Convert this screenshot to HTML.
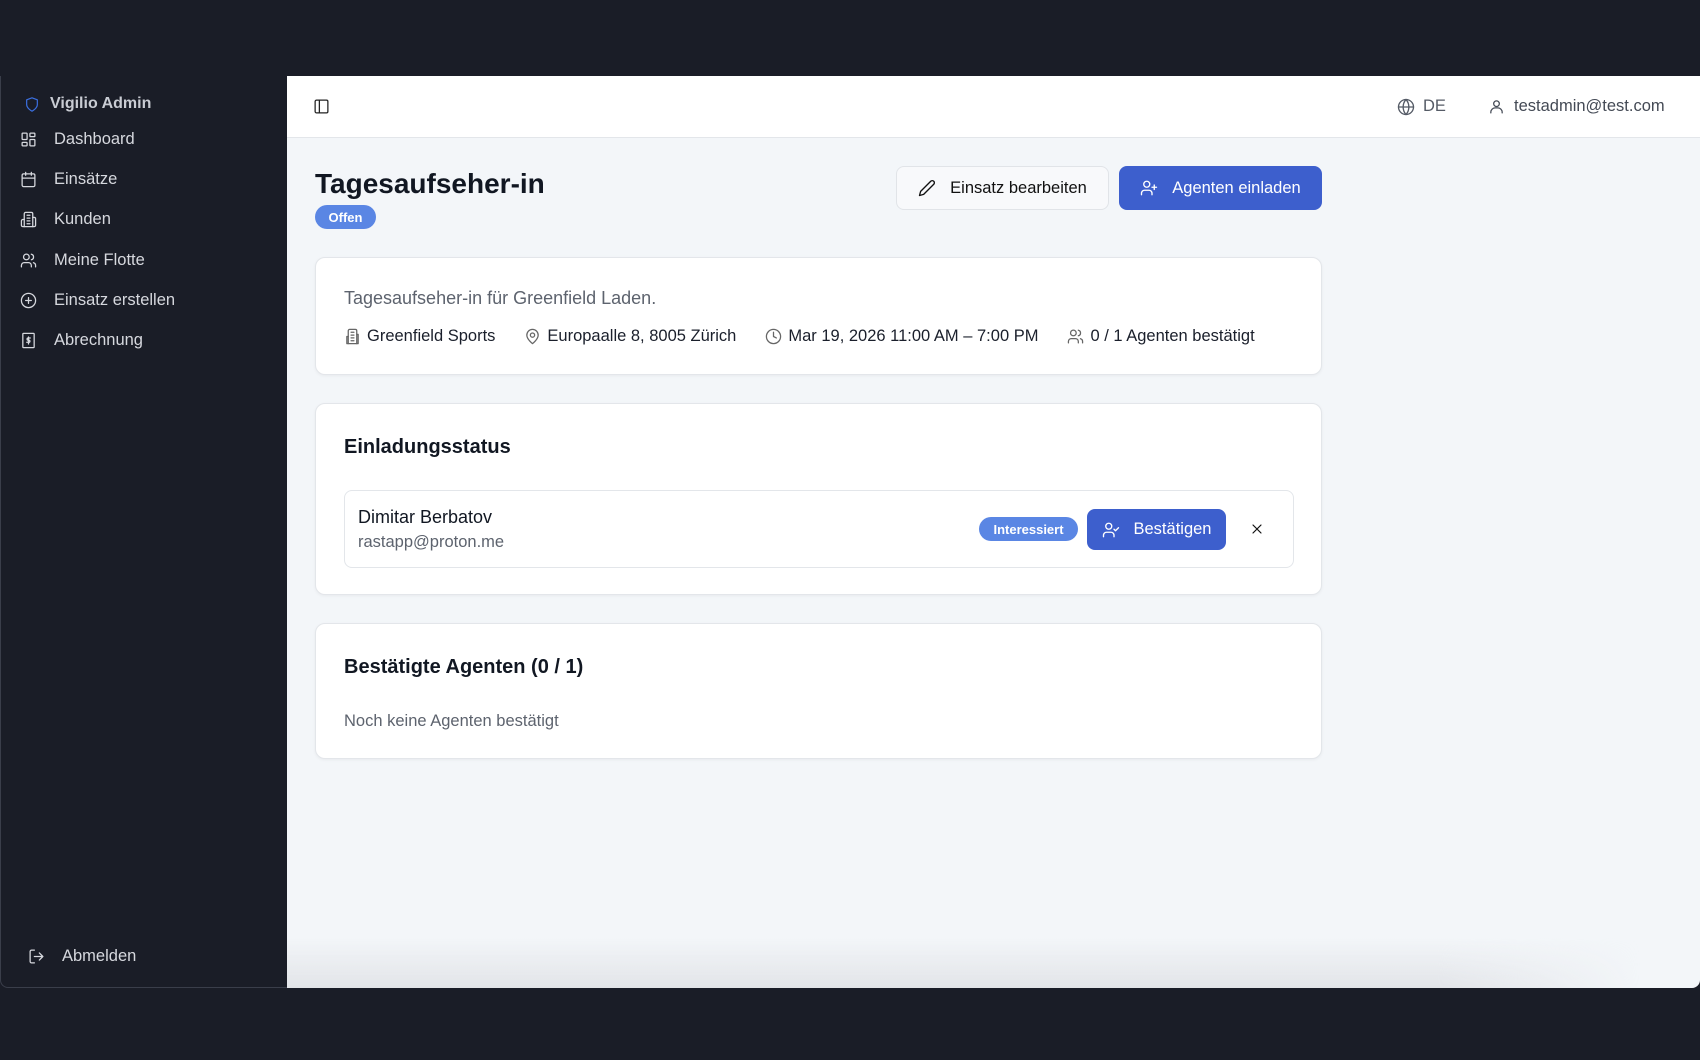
<!DOCTYPE html>
<html><head><meta charset="utf-8"><style>
*{box-sizing:border-box;margin:0;padding:0}
body{width:1700px;height:1060px;background:#1a1d27;font-family:"Liberation Sans",sans-serif;position:relative;overflow:hidden;color:#0f1420}
.side{position:absolute;left:0;top:76px;width:287px;height:912px;background:#1a1d27;border-left:1px solid #3a3e4a;border-bottom:1px solid #3a3e4a;border-radius:0 0 0 8px}
.brand{position:absolute;left:24px;top:95px;color:#c9ccd3;font-weight:bold;font-size:16px;display:flex;align-items:center;gap:10px}
.nav{position:absolute;left:20px;color:#d6d8de;font-size:16.5px;display:flex;align-items:center;gap:17px}
.nav svg{width:17px;height:17px}
.main{position:absolute;left:287px;top:76px;width:1413px;height:912px;background:#f3f6f9;border-radius:0 0 8px 0;overflow:hidden}
.hdr{height:62px;background:#fff;border-bottom:1px solid #e3e6ea;position:relative}
.shade{position:absolute;left:0;right:60px;bottom:0;height:50px;background:linear-gradient(#f3f6f900,#e2e4e8);-webkit-mask-image:linear-gradient(90deg,#000 85%,transparent);mask-image:linear-gradient(90deg,#000 85%,transparent)}
.card{position:absolute;left:28px;width:1007px;background:#fff;border:1px solid #e3e6ea;border-radius:10px;box-shadow:0 1px 3px rgba(0,0,0,.05)}
.btn{position:absolute;top:90px;height:44px;border-radius:8px;display:flex;align-items:center;justify-content:center;gap:14px;font-size:16.5px}
.meta{display:flex;align-items:center;gap:6px;font-size:16.5px;color:#1a1f2b}
svg{fill:none;stroke:currentColor;stroke-width:1.8;stroke-linecap:round;stroke-linejoin:round}
</style></head><body>
<div class="side"></div>
<div class="brand"><svg width="16" height="17" viewBox="0 0 24 24" style="stroke:#3b6fe0"><path d="M12 22s8-4 8-10V5l-8-3-8 3v7c0 6 8 10 8 10z"/></svg>Vigilio Admin</div>
<div class="nav" style="top:130px"><svg viewBox="0 0 24 24"><rect x="3" y="3" width="7" height="9" rx="1"/><rect x="14" y="3" width="7" height="5" rx="1"/><rect x="14" y="12" width="7" height="9" rx="1"/><rect x="3" y="16" width="7" height="5" rx="1"/></svg>Dashboard</div>
<div class="nav" style="top:170px"><svg viewBox="0 0 24 24"><rect x="3" y="4" width="18" height="18" rx="2"/><path d="M16 2v4M8 2v4M3 10h18"/></svg>Einsätze</div>
<div class="nav" style="top:210px"><svg viewBox="0 0 24 24"><path d="M6 22V4a2 2 0 0 1 2-2h8a2 2 0 0 1 2 2v18z"/><path d="M6 12H4a2 2 0 0 0-2 2v6a2 2 0 0 0 2 2h2M18 9h2a2 2 0 0 1 2 2v9a2 2 0 0 1-2 2h-2M10 6h4M10 10h4M10 14h4M10 18h4"/></svg>Kunden</div>
<div class="nav" style="top:251px"><svg viewBox="0 0 24 24"><path d="M16 21v-2a4 4 0 0 0-4-4H6a4 4 0 0 0-4 4v2"/><circle cx="9" cy="7" r="4"/><path d="M22 21v-2a4 4 0 0 0-3-3.9M16 3.1a4 4 0 0 1 0 7.8"/></svg>Meine Flotte</div>
<div class="nav" style="top:291px"><svg viewBox="0 0 24 24"><circle cx="12" cy="12" r="10"/><path d="M8 12h8M12 8v8"/></svg>Einsatz erstellen</div>
<div class="nav" style="top:331px"><svg viewBox="0 0 24 24"><rect x="4" y="2" width="16" height="20" rx="1"/><path d="M14.5 8.5h-3a1.5 1.5 0 0 0 0 3h1a1.5 1.5 0 0 1 0 3h-3M12 7v10"/></svg>Abrechnung</div>
<div class="nav" style="top:947px;left:28px"><svg viewBox="0 0 24 24"><path d="M9 21H5a2 2 0 0 1-2-2V5a2 2 0 0 1 2-2h4M16 17l5-5-5-5M21 12H9"/></svg>Abmelden</div>

<div class="main">
<div class="hdr">
<svg style="position:absolute;left:26px;top:22px;color:#222" width="17" height="17" viewBox="0 0 24 24"><rect x="3" y="3" width="18" height="18" rx="2"/><path d="M9 3v18"/></svg>
<div style="position:absolute;left:1110px;top:21px;display:flex;align-items:center;gap:8px;color:#555b66;font-size:16.5px"><svg width="18" height="18" viewBox="0 0 24 24"><circle cx="12" cy="12" r="10"/><path d="M2 12h20M12 2a15 15 0 0 1 0 20M12 2a15 15 0 0 0 0 20"/></svg>DE</div>
<div style="position:absolute;left:1201px;top:21px;display:flex;align-items:center;gap:9px;color:#444a55;font-size:16.5px"><svg width="17" height="17" viewBox="0 0 24 24"><circle cx="12" cy="8" r="4"/><path d="M4 21v-1a6 6 0 0 1 6-6h4a6 6 0 0 1 6 6v1"/></svg>testadmin@test.com</div>
</div>
<div style="position:absolute;left:28px;top:92px;font-size:28px;font-weight:bold;color:#111722">Tagesaufseher-in</div>
<div style="position:absolute;left:28px;top:129px;width:61px;height:24px;border-radius:12px;background:#5a86e4;color:#fff;font-size:13px;font-weight:bold;display:flex;align-items:center;justify-content:center">Offen</div>
<div class="btn" style="left:609px;width:213px;background:#f8f9fb;border:1px solid #e1e4e8;color:#111"><svg width="18" height="18" viewBox="0 0 24 24"><path d="M17 3a2.8 2.8 0 1 1 4 4L7.5 20.5 2 22l1.5-5.5z"/></svg>Einsatz bearbeiten</div>
<div class="btn" style="left:832px;width:203px;background:#3d5fcd;color:#fff"><svg width="18" height="18" viewBox="0 0 24 24"><path d="M16 21v-2a4 4 0 0 0-4-4H6a4 4 0 0 0-4 4v2"/><circle cx="9" cy="7" r="4"/><path d="M19 8v6M22 11h-6"/></svg>Agenten einladen</div>

<div class="card" style="top:181px;height:118px">
<div style="position:absolute;left:28px;top:30px;font-size:18px;color:#5d636e">Tagesaufseher-in für Greenfield Laden.</div>
<div style="position:absolute;left:28px;top:69px;display:flex;gap:29px">
<div class="meta"><svg width="17" height="17" viewBox="0 0 24 24" style="color:#666"><path d="M6 22V4a2 2 0 0 1 2-2h8a2 2 0 0 1 2 2v18z"/><path d="M6 12H4v10h2M18 9h2v13h-2M10 6h4M10 10h4M10 14h4M10 18h4"/></svg>Greenfield Sports</div>
<div class="meta"><svg width="17" height="17" viewBox="0 0 24 24" style="color:#666"><path d="M20 10c0 6-8 12-8 12s-8-6-8-12a8 8 0 0 1 16 0z"/><circle cx="12" cy="10" r="3"/></svg>Europaalle 8, 8005 Zürich</div>
<div class="meta"><svg width="17" height="17" viewBox="0 0 24 24" style="color:#666"><circle cx="12" cy="12" r="10"/><path d="M12 6v6l4 2"/></svg>Mar 19, 2026 11:00 AM – 7:00 PM</div>
<div class="meta"><svg width="17" height="17" viewBox="0 0 24 24" style="color:#666"><path d="M16 21v-2a4 4 0 0 0-4-4H6a4 4 0 0 0-4 4v2"/><circle cx="9" cy="7" r="4"/><path d="M22 21v-2a4 4 0 0 0-3-3.9M16 3.1a4 4 0 0 1 0 7.8"/></svg>0 / 1 Agenten bestätigt</div>
</div></div>

<div class="card" style="top:327px;height:192px">
<div style="position:absolute;left:28px;top:32px;font-size:20px;font-weight:bold;color:#111722">Einladungsstatus</div>
<div style="position:absolute;left:28px;top:86px;width:950px;height:78px;border:1px solid #e3e6ea;border-radius:8px">
<div style="position:absolute;left:13px;top:16px;font-size:18px;color:#111722">Dimitar Berbatov</div>
<div style="position:absolute;left:13px;top:42px;font-size:16.5px;color:#5d636e">rastapp@proton.me</div>
<div style="position:absolute;left:634px;top:26px;width:99px;height:24px;border-radius:12px;background:#5a86e4;color:#fff;font-size:13px;font-weight:bold;display:flex;align-items:center;justify-content:center">Interessiert</div>
<div style="position:absolute;left:742px;top:18px;width:139px;height:41px;border-radius:8px;background:#3d5fcd;color:#fff;font-size:16.5px;display:flex;align-items:center;justify-content:center;gap:14px"><svg width="18" height="18" viewBox="0 0 24 24"><path d="M16 21v-2a4 4 0 0 0-4-4H6a4 4 0 0 0-4 4v2"/><circle cx="9" cy="7" r="4"/><path d="M16 11l2 2 4-4"/></svg>Bestätigen</div>
<svg style="position:absolute;left:904px;top:30px;color:#111" width="16" height="16" viewBox="0 0 24 24"><path d="M18 6 6 18M6 6l12 12"/></svg>
</div></div>

<div class="card" style="top:547px;height:136px">
<div style="position:absolute;left:28px;top:32px;font-size:20px;font-weight:bold;color:#111722">Bestätigte Agenten (0 / 1)</div>
<div style="position:absolute;left:28px;top:88px;font-size:16.5px;color:#5d636e">Noch keine Agenten bestätigt</div>
</div>
<div class="shade"></div>
</div>
</body></html>
